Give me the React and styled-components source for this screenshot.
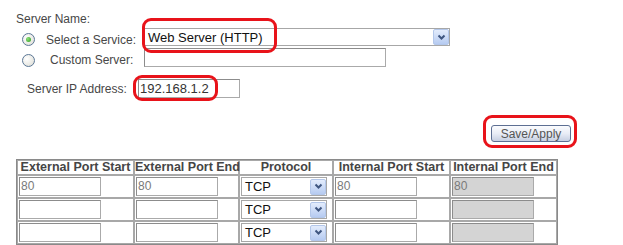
import React from "react";
import styled, { createGlobalStyle } from "styled-components";

const GlobalStyle = createGlobalStyle`
  body {
    margin: 0;
    background: #fff;
    font-family: "Liberation Sans", Arial, sans-serif;
    font-size: 12px;
    color: #474747;
  }
`;

const Page = styled.div`
  width: 623px;
  height: 245px;
  overflow: hidden;
  box-sizing: border-box;
  padding: 13px 0 0 16px;
`;

const Caption = styled.div`
  height: 13px;
  line-height: 13px;
`;

const Row = styled.div`
  display: flex;
  align-items: center;
  height: ${(p) => p.$h || 19}px;
  margin-top: ${(p) => p.$gap || 0}px;
`;

const Label = styled.span`
  display: inline-block;
  margin-left: ${(p) => p.$indent || 0}px;
  margin-top: ${(p) => p.$drop || 0}px;
  width: ${(p) => p.$width}px;
  white-space: nowrap;
`;

const Radio = styled.span`
  position: relative;
  display: inline-block;
  width: 11px;
  height: 11px;
  margin-left: 6px;
  margin-top: 5px;
  border: 1px solid #5b7796;
  border-radius: 50%;
  background: radial-gradient(circle at 35% 35%, #ffffff 0%, #e6e6e0 70%, #d0d0c8 100%);

  &::after {
    content: "";
    display: ${(p) => (p.$checked ? "block" : "none")};
    position: absolute;
    left: 3px;
    top: 3px;
    width: 5px;
    height: 5px;
    border-radius: 50%;
    background: radial-gradient(circle at 35% 35%, #8ee07a, #2b9a1e);
  }
`;

const Mark = styled.span`
  position: relative;
  display: inline-block;
`;

const Ring = styled.span`
  position: absolute;
  left: ${(p) => p.$l}px;
  top: ${(p) => p.$t}px;
  width: ${(p) => p.$w}px;
  height: ${(p) => p.$h}px;
  box-sizing: border-box;
  border: 3px solid #e8131a;
  border-radius: 9px;
  pointer-events: none;
`;

const DropBox = styled.div`
  display: flex;
  align-items: center;
  justify-content: space-between;
  box-sizing: border-box;
  width: ${(p) => p.$w}px;
  height: ${(p) => p.$h || 18}px;
  border: 1px solid #a7a7a7;
  background: #fff;
  font-size: ${(p) => p.$size || 13}px;
  color: #111;
  padding-left: 3px;
`;

const DropButton = styled.span`
  display: flex;
  align-items: center;
  justify-content: center;
  box-sizing: border-box;
  width: 16px;
  height: 16px;
  border: 1px solid #b3c7ea;
  border-radius: 2px;
  background: linear-gradient(#e3ecfc, #b6cbf1);
`;

const TextBox = styled.div`
  box-sizing: border-box;
  width: ${(p) => p.$w}px;
  height: ${(p) => p.$h || 19}px;
  line-height: ${(p) => (p.$h || 19) - 2}px;
  border: 1px solid #aaaaaa;
  border-top-color: #8c8c8c;
  border-left-color: #8c8c8c;
  background: ${(p) => (p.$disabled ? "#d4d4d4" : "#fff")};
  color: ${(p) => p.$color || "#7a7a7a"};
  font-size: ${(p) => p.$size || 12}px;
  padding-left: 1px;
  white-space: nowrap;
`;

const SaveButton = styled.button`
  box-sizing: border-box;
  width: 80px;
  height: 17px;
  padding: 0;
  border: 1px solid #5d6f93;
  border-radius: 3px;
  background: linear-gradient(#fbfcfe 0%, #e9edf6 50%, #c6cfe2 100%);
  font-family: "Liberation Sans", Arial, sans-serif;
  font-size: 12px;
  color: #555;
`;

const Table = styled.table`
  margin-top: 17px;
  width: 542px;
  table-layout: fixed;
  border-collapse: separate;
  border-spacing: 0;
  border: 1px solid #8a8a8a;
`;

const Th = styled.th`
  padding: 0;
  height: 13px;
  line-height: 13px;
  border: 1px solid #a8a8a8;
  font-size: 12.5px;
  font-weight: bold;
  color: #454545;
  white-space: nowrap;
  overflow: visible;
  text-align: center;
`;

const Td = styled.td`
  padding: 1px 0 1px 1px;
  height: 19px;
  border: 1px solid #a8a8a8;
  vertical-align: middle;
`;

function Chevron() {
  return (
    <svg width="9" height="7" viewBox="0 0 9 7">
      <path d="M1.5 1.5 L4.5 4.5 L7.5 1.5" fill="none" stroke="#3f5680" strokeWidth="2" />
    </svg>
  );
}

function Select({ value, width, height, size }) {
  return (
    <DropBox $w={width} $h={height} $size={size}>
      <span>{value}</span>
      <DropButton>
        <Chevron />
      </DropButton>
    </DropBox>
  );
}

const rows = [
  { start: "80", end: "80", inStart: "80", inEnd: "80" },
  { start: "", end: "", inStart: "", inEnd: "" },
  { start: "", end: "", inStart: "", inEnd: "" },
];

export default function App() {
  return (
    <Page>
      <GlobalStyle />
      <Caption>Server Name:</Caption>
      <Row $h={18} $gap={2}>
        <Radio $checked />
        <Label $indent={11} $width={98} $drop={5}>
          Select a Service:
        </Label>
        <Mark>
          <Select value="Web Server (HTTP)" width={306} height={18} />
          <Ring $l={-2} $t={-10} $w={135} $h={35} />
        </Mark>
      </Row>
      <Row $h={19} $gap={2}>
        <Radio />
        <Label $indent={15} $width={94} $drop={5}>
          Custom Server:
        </Label>
        <TextBox $w={242} />
      </Row>
      <Row $h={19} $gap={12}>
        <Label $indent={11} $width={111} $drop={1}>
          Server IP Address:
        </Label>
        <Mark>
          <TextBox $w={102} $color="#333" $size={13}>
            192.168.1.2
          </TextBox>
          <Ring $l={-5} $t={-4} $w={85} $h={26} />
        </Mark>
      </Row>
      <Row $h={17} $gap={27}>
        <Label $width={475} />
        <Mark>
          <SaveButton>Save/Apply</SaveButton>
          <Ring $l={-8} $t={-10} $w={94} $h={33} />
        </Mark>
      </Row>
      <Table>
        <colgroup>
          <col style={{ width: 117 }} />
          <col style={{ width: 105 }} />
          <col style={{ width: 94 }} />
          <col style={{ width: 117 }} />
          <col style={{ width: 107 }} />
        </colgroup>
        <thead>
          <tr>
            <Th>External Port Start</Th>
            <Th>External Port End</Th>
            <Th>Protocol</Th>
            <Th>Internal Port Start</Th>
            <Th>Internal Port End</Th>
          </tr>
        </thead>
        <tbody>
          {rows.map((r, i) => (
            <tr key={i}>
              <Td>
                <TextBox $w={82}>{r.start}</TextBox>
              </Td>
              <Td>
                <TextBox $w={82}>{r.end}</TextBox>
              </Td>
              <Td>
                <Select value="TCP" width={86} height={19} size={13} />
              </Td>
              <Td>
                <TextBox $w={82}>{r.inStart}</TextBox>
              </Td>
              <Td>
                <TextBox $w={82} $disabled>
                  {r.inEnd}
                </TextBox>
              </Td>
            </tr>
          ))}
        </tbody>
      </Table>
    </Page>
  );
}
